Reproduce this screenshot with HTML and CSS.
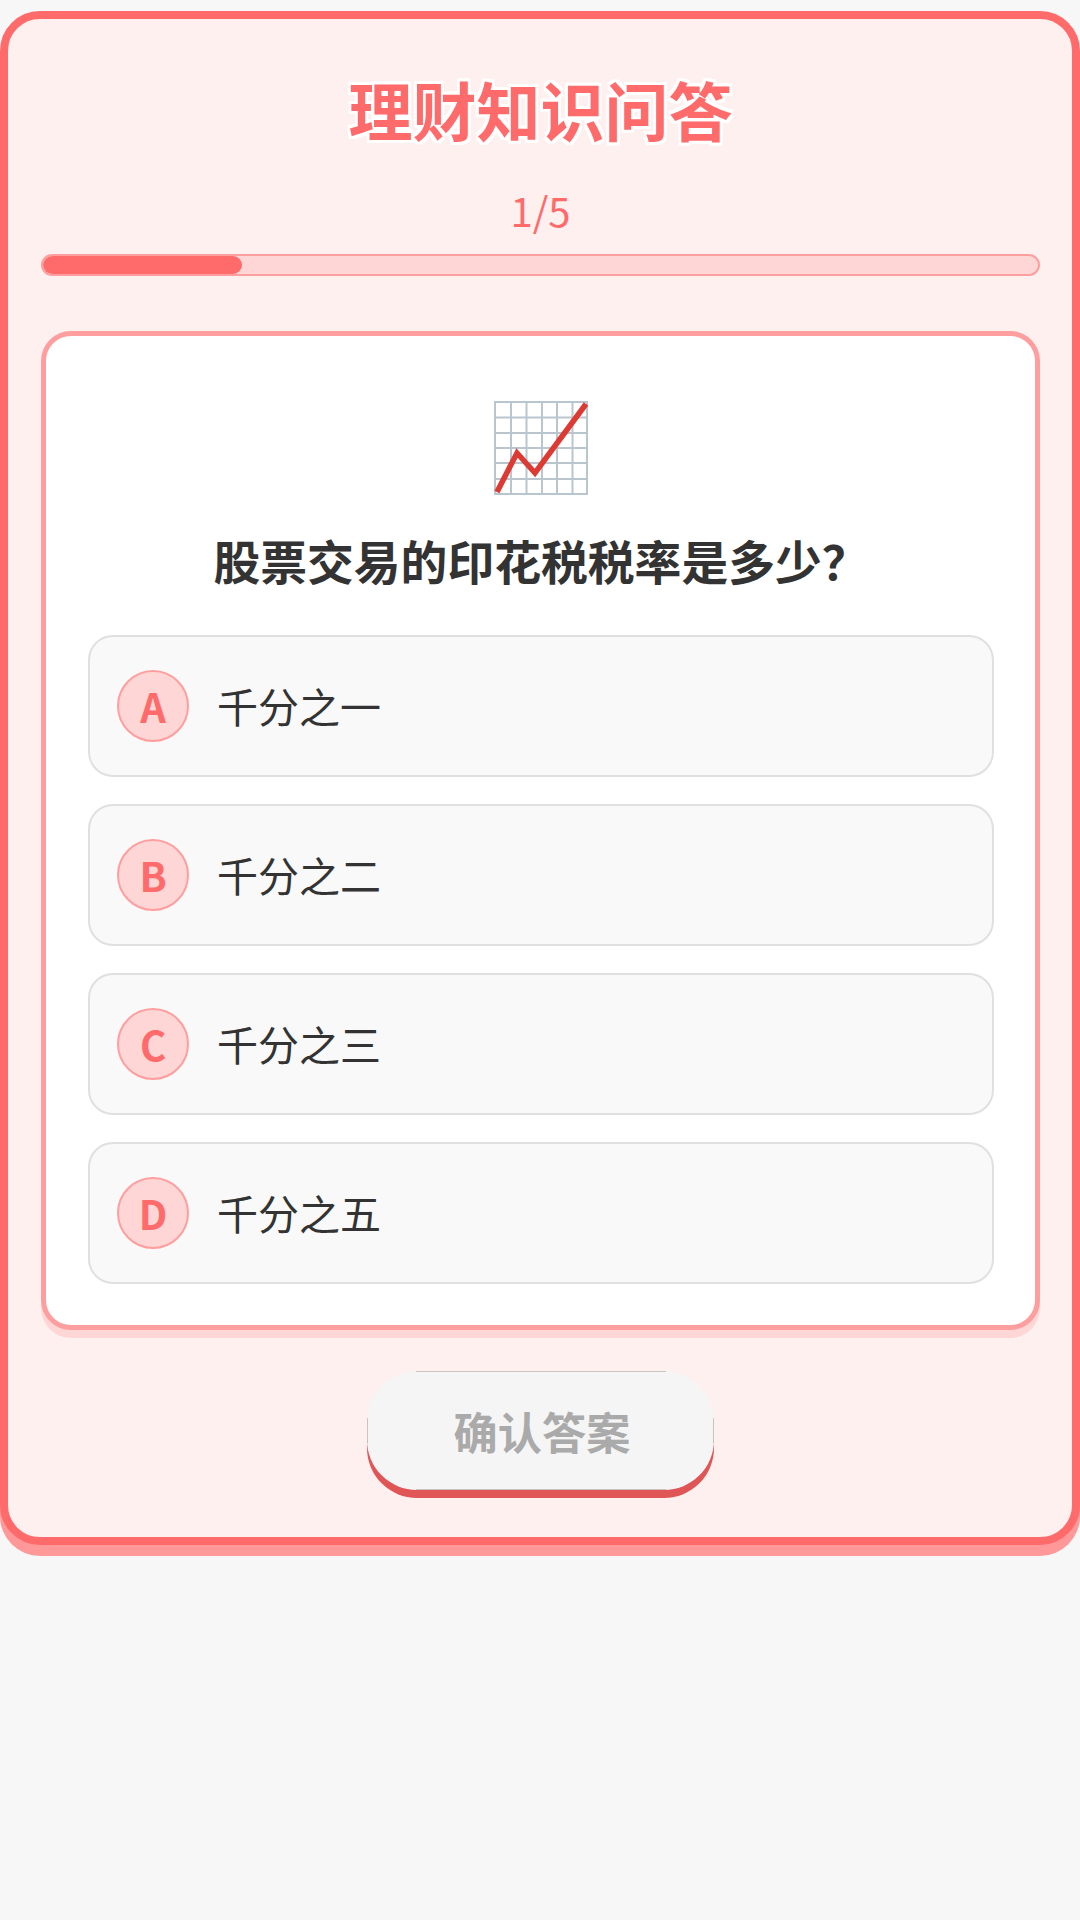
FILE: index.html
```html
<!DOCTYPE html>
<html lang="zh-CN">
<head>
    <meta charset="UTF-8">
    <meta name="viewport" content="width=device-width, initial-scale=1.0">
    <title>理财知识问答</title>
    <link rel="stylesheet" href="styles.css">
</head>
<body>
    <div class="quiz">
        <div class="title">理财知识问答</div>
        <div class="counter">1/5</div>
        <div class="progress">
            <div class="progress-fill"></div>
        </div>

        <div class="card">
            <!-- Chart icon -->
            <svg class="chart" viewBox="0 0 94 94" aria-hidden="true">
                <path class="chart-grid" d="M1 1H93V93H1ZM17 1V93M32.500 1V93M48 1V93M63 1V93M78.500 1V93M1 16.500H93M1 32H93M1 47H93M1 62H93M1 78H93"/>
                <path class="chart-line" d="M3 91L23 52L41 72L92 3"/>
            </svg>
            <div class="question">股票交易的印花税税率是多少？</div>

            <div class="options">
                <div class="option">
                    <div class="letter">A</div>
                    <div class="option-text">千分之一</div>
                </div>
                <div class="option">
                    <div class="letter">B</div>
                    <div class="option-text">千分之二</div>
                </div>
                <div class="option">
                    <div class="letter">C</div>
                    <div class="option-text">千分之三</div>
                </div>
                <div class="option">
                    <div class="letter">D</div>
                    <div class="option-text">千分之五</div>
                </div>
            </div>
        </div>

        <div class="confirm">确认答案</div>
    </div>
</body>
</html>
```

FILE: styles.css
```css
* {
    box-sizing: border-box;
}

body {
    font-family: "Noto Sans CJK SC", "Noto Sans", sans-serif;
    background-color: #f7f7f7;
    margin: 0;
    padding: 11px 0 0;
    height: 1920px;
    color: #333;
}

.quiz {
    height: 1534px;
    padding: 0 32px 0 33px;
    background-color: #fff0f0;
    border: 8px solid #ff6b6b;
    border-radius: 40px;
    box-shadow: 0 11px 0 #ff9999;
    display: flex;
    flex-direction: column;
    align-items: center;
}

.title {
    margin-top: 43px;
    height: 92px;
    font-size: 64px;
    font-weight: 700;
    line-height: 92px;
    color: #ff6b6b;
    text-shadow: 2.600px 2.600px 0 #fff, -2.600px -2.600px 0 #fff, 2.600px -2.600px 0 #fff, -2.600px 2.600px 0 #fff,
        2.600px 0 0 #fff, -2.600px 0 0 #fff, 0 2.600px 0 #fff, 0 -2.600px 0 #fff;
}

.counter {
    margin-top: 28px;
    height: 56px;
    font-size: 40px;
    line-height: 56px;
    color: #ff6b6b;
}

.progress {
    width: 100%;
    height: 22px;
    margin-top: 16px;
    background-color: #ffd6d6;
    border: 2px solid #ff9e9e;
    border-radius: 11px;
    overflow: hidden;
}

.progress-fill {
    width: 20%;
    height: 100%;
    background-color: #ff6b6b;
    border-radius: 9px;
}

.card {
    width: 100%;
    height: 999px;
    margin-top: 55px;
    padding: 65px 41px 0 42px;
    background-color: #fff;
    border: 5px solid #ff9e9e;
    border-radius: 30px;
    box-shadow: 0 8px 0 #ffd6d6;
    display: flex;
    flex-direction: column;
    align-items: center;
}

.chart {
    width: 94px;
    height: 94px;
    flex: none;
}

.chart-grid {
    fill: none;
    stroke: #b9c6cd;
    stroke-width: 2;
}

.chart-line {
    fill: none;
    stroke: #dc3a32;
    stroke-width: 5.500;
}

.question {
    margin-top: 31px;
    height: 68px;
    font-size: 46.800px;
    font-weight: 700;
    line-height: 68px;
    white-space: nowrap;
}

.options {
    width: 100%;
    margin-top: 41px;
    display: flex;
    flex-direction: column;
    gap: 27px;
}

.option {
    height: 142px;
    padding: 0 27px;
    background-color: #f9f9f9;
    border: 2px solid #e0e0e0;
    border-radius: 25px;
    display: flex;
    align-items: center;
    gap: 28px;
}

.letter {
    width: 72px;
    height: 72px;
    flex: none;
    background-color: #ffd6d6;
    border: 2px solid #ff9e9e;
    border-radius: 50%;
    color: #ff6b6b;
    font-size: 40px;
    font-weight: 700;
    display: flex;
    align-items: center;
    justify-content: center;
}

.option-text {
    font-size: 41px;
    line-height: 56px;
    margin-top: -2px;
}

/* thin edge shows on the straight sides only, not round the corners */
.confirm {
    width: 347px;
    height: 119px;
    margin-top: 41px;
    padding-left: 3px;
    background:
        linear-gradient(#cbc2c2, #cbc2c2) top center / 250px 1px no-repeat,
        linear-gradient(#cbc2c2, #cbc2c2) bottom center / 250px 1px no-repeat,
        linear-gradient(#cbc2c2, #cbc2c2) left center / 1px 25px no-repeat,
        linear-gradient(#cbc2c2, #cbc2c2) right center / 1px 25px no-repeat,
        #f5f5f5;
    border-radius: 50px;
    box-shadow: 0 8px 0 #e05555;
    color: #aaa;
    font-size: 44.200px;
    font-weight: 700;
    display: flex;
    align-items: center;
    justify-content: center;
}
```
